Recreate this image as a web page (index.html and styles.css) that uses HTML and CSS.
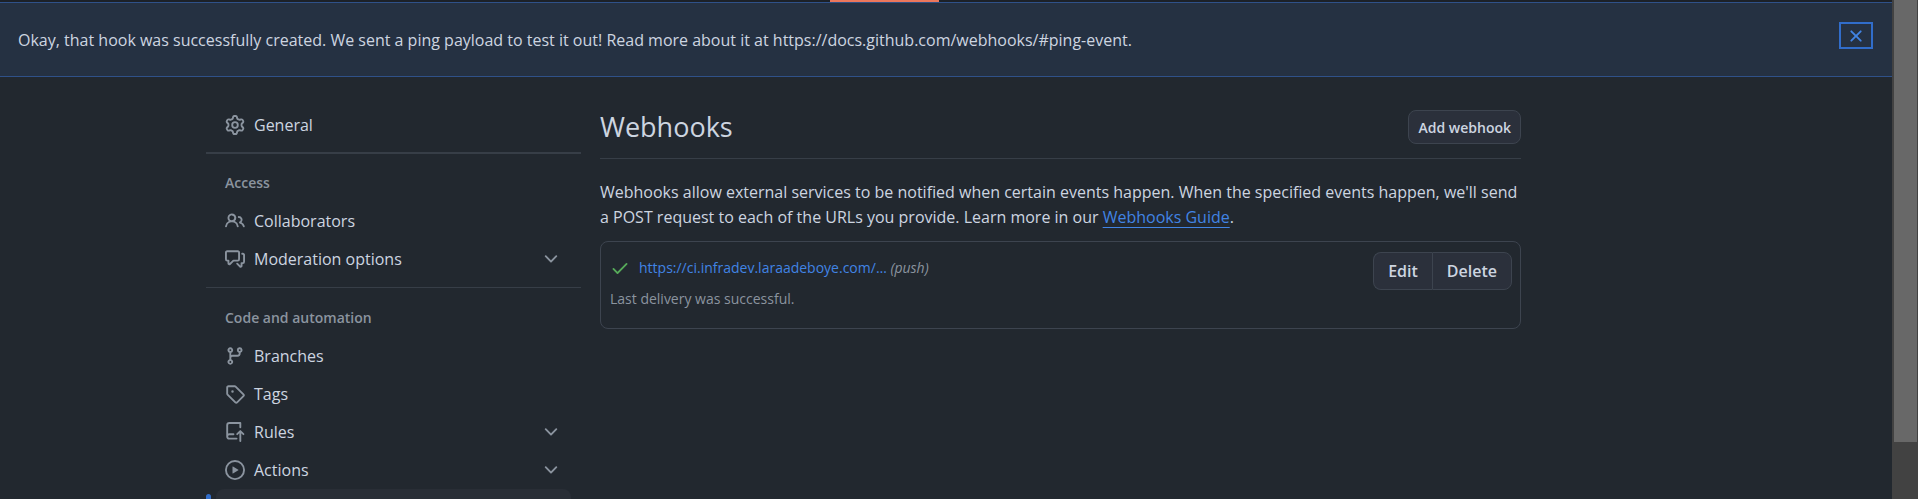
FILE: index.html
```html
<!DOCTYPE html>
<html lang="en">
<head>
<meta charset="utf-8">
<meta name="viewport" content="width=device-width, initial-scale=1">
<title>Webhooks</title>
<link rel="stylesheet" href="styles.css">
</head>
<body>
<div class="page">
  <div class="tabs"><span class="tabs-selected"></span></div>
  <div class="flash" role="status">
    <p class="flash-text">Okay, that hook was successfully created. We sent a ping payload to test it out! Read more about it at https://docs.github.com/webhooks/#ping-event.</p>
    <button class="flash-close" type="button" aria-label="Dismiss this message">
      <svg class="icon-small" viewBox="0 0 16 16" aria-hidden="true"><path d="M3.72 3.72a.75.75 0 0 1 1.06 0L8 6.94l3.22-3.22a.749.749 0 0 1 1.275.326.749.749 0 0 1-.215.734L9.06 8l3.22 3.22a.749.749 0 0 1-.326 1.275.749.749 0 0 1-.734-.215L8 9.06l-3.22 3.22a.751.751 0 0 1-1.042-.018.751.751 0 0 1-.018-1.042L6.94 8 3.72 4.78a.75.75 0 0 1 0-1.06Z"/></svg>
    </button>
  </div>
  <div class="layout">
    <nav class="sidebar" aria-label="Settings">
      <a class="item" href="#general">
        <svg class="icon" viewBox="0 0 16 16" aria-hidden="true"><path d="M8 0a8.2 8.2 0 0 1 .701.031C9.444.095 9.99.645 10.16 1.29l.288 1.107c.018.066.079.158.212.224.231.114.454.243.668.386.123.082.233.09.299.071l1.103-.303c.644-.176 1.392.021 1.82.63.27.385.506.792.704 1.218.315.675.111 1.422-.364 1.891l-.814.806c-.049.048-.098.147-.088.294.016.257.016.515 0 .772-.01.147.038.246.088.294l.814.806c.475.469.679 1.216.364 1.891a7.977 7.977 0 0 1-.704 1.217c-.428.61-1.176.807-1.82.63l-1.102-.302c-.067-.019-.177-.011-.3.071a5.909 5.909 0 0 1-.668.386c-.133.066-.194.158-.211.224l-.29 1.106c-.168.646-.715 1.196-1.458 1.26a8.006 8.006 0 0 1-1.402 0c-.743-.064-1.289-.614-1.458-1.26l-.289-1.106c-.018-.066-.079-.158-.212-.224a5.738 5.738 0 0 1-.668-.386c-.123-.082-.233-.09-.299-.071l-1.103.303c-.644.176-1.392-.021-1.82-.63a8.12 8.12 0 0 1-.704-1.218c-.315-.675-.111-1.422.363-1.891l.815-.806c.05-.048.098-.147.088-.294a6.214 6.214 0 0 1 0-.772c.01-.147-.038-.246-.088-.294l-.815-.806C.635 6.045.431 5.298.746 4.623a7.92 7.92 0 0 1 .704-1.217c.428-.61 1.176-.807 1.82-.63l1.102.302c.067.019.177.011.3-.071.214-.143.437-.272.668-.386.133-.066.194-.158.211-.224l.29-1.106C6.009.645 6.556.095 7.299.03 7.53.01 7.764 0 8 0Zm-.571 1.525c-.036.003-.108.036-.137.146l-.289 1.105c-.147.561-.549.967-.998 1.189-.173.086-.34.183-.5.29-.417.278-.97.423-1.529.27l-1.103-.303c-.109-.03-.175.016-.195.045-.22.312-.412.644-.573.99-.014.031-.021.11.059.19l.815.806c.411.406.562.957.53 1.456a4.709 4.709 0 0 0 0 .582c.032.499-.119 1.05-.53 1.456l-.815.806c-.081.08-.073.159-.059.19.162.346.353.677.573.989.02.03.085.076.195.046l1.102-.303c.56-.153 1.113-.008 1.53.27.161.107.328.204.501.29.447.222.85.629.997 1.189l.289 1.105c.029.109.101.143.137.146a6.6 6.6 0 0 0 1.142 0c.036-.003.108-.036.137-.146l.289-1.105c.147-.561.549-.967.998-1.189.173-.086.34-.183.5-.29.417-.278.97-.423 1.529-.27l1.103.303c.109.029.175-.016.195-.045.22-.313.411-.644.573-.99.014-.031.021-.11-.059-.19l-.815-.806c-.411-.406-.562-.957-.53-1.456a4.709 4.709 0 0 0 0-.582c-.032-.499.119-1.05.53-1.456l.815-.806c.081-.08.073-.159.059-.19a6.464 6.464 0 0 0-.573-.989c-.02-.03-.085-.076-.195-.046l-1.102.303c-.56.153-1.113.008-1.53-.27a4.44 4.44 0 0 0-.501-.29c-.447-.222-.85-.629-.997-1.189l-.289-1.105c-.029-.11-.101-.143-.137-.146a6.6 6.6 0 0 0-1.142 0ZM11 8a3 3 0 1 1-6 0 3 3 0 0 1 6 0ZM9.5 8a1.5 1.5 0 1 0-3.001.001A1.5 1.5 0 0 0 9.5 8Z"/></svg>
        <span class="item-label">General</span>
      </a>
      <section class="group group-strong">
        <h2 class="group-title">Access</h2>
        <a class="item" href="#collaborators">
          <svg class="icon" viewBox="0 0 16 16" aria-hidden="true"><path d="M2 5.5a3.5 3.5 0 1 1 5.898 2.549 5.508 5.508 0 0 1 3.034 4.084.75.75 0 1 1-1.482.235 4 4 0 0 0-7.9 0 .75.75 0 0 1-1.482-.236A5.507 5.507 0 0 1 3.102 8.05 3.493 3.493 0 0 1 2 5.5ZM11 4a3.001 3.001 0 0 1 2.22 5.018 5.01 5.01 0 0 1 2.56 3.012.749.749 0 0 1-.885.954.752.752 0 0 1-.549-.514 3.507 3.507 0 0 0-2.522-2.372.75.75 0 0 1-.574-.73v-.352a.75.75 0 0 1 .416-.672A1.5 1.5 0 0 0 11 5.5.75.75 0 0 1 11 4Zm-5.5-.5a2 2 0 1 0-.001 3.999A2 2 0 0 0 5.5 3.5Z"/></svg>
          <span class="item-label">Collaborators</span>
        </a>
        <button class="item" type="button" aria-expanded="false">
          <svg class="icon" viewBox="0 0 16 16" aria-hidden="true"><path d="M1.75 1h8.5c.966 0 1.75.784 1.75 1.75v5.5A1.75 1.75 0 0 1 10.25 10H7.061l-2.574 2.573A1.458 1.458 0 0 1 2 11.543V10h-.25A1.75 1.75 0 0 1 0 8.25v-5.5C0 1.784.784 1 1.75 1ZM1.5 2.75v5.5c0 .138.112.25.25.25h1a.75.75 0 0 1 .75.75v2.19l2.72-2.72a.749.749 0 0 1 .53-.22h3.5a.25.25 0 0 0 .25-.25v-5.5a.25.25 0 0 0-.25-.25h-8.5a.25.25 0 0 0-.25.25Zm13 2a.25.25 0 0 0-.25-.25h-.5a.75.75 0 0 1 0-1.5h.5c.966 0 1.75.784 1.75 1.75v5.5A1.75 1.75 0 0 1 14.25 12H14v1.543a1.458 1.458 0 0 1-2.487 1.03L9.22 12.28a.749.749 0 0 1 .326-1.275.749.749 0 0 1 .734.215l2.22 2.22v-2.19a.75.75 0 0 1 .75-.75h1a.25.25 0 0 0 .25-.25Z"/></svg>
          <span class="item-label">Moderation options</span>
          <svg class="icon" viewBox="0 0 16 16" aria-hidden="true"><path d="M12.78 5.22a.749.749 0 0 1 0 1.06l-4.25 4.25a.749.749 0 0 1-1.06 0L3.22 6.28a.749.749 0 1 1 1.06-1.06L8 8.939l3.72-3.719a.749.749 0 0 1 1.06 0Z"/></svg>
        </button>
      </section>
      <section class="group">
        <h2 class="group-title">Code and automation</h2>
        <a class="item" href="#branches">
          <svg class="icon" viewBox="0 0 16 16" aria-hidden="true"><path d="M9.5 3.25a2.25 2.25 0 1 1 3 2.122V6A2.5 2.5 0 0 1 10 8.5H6a1 1 0 0 0-1 1v1.128a2.251 2.251 0 1 1-1.5 0V5.372a2.25 2.25 0 1 1 1.5 0v1.836A2.493 2.493 0 0 1 6 7h4a1 1 0 0 0 1-1v-.628A2.25 2.25 0 0 1 9.5 3.25Zm-6 0a.75.75 0 1 0 1.5 0 .75.75 0 0 0-1.5 0Zm8.25-.75a.75.75 0 1 0 0 1.5.75.75 0 0 0 0-1.5ZM4.25 12a.75.75 0 1 0 0 1.5.75.75 0 0 0 0-1.5Z"/></svg>
          <span class="item-label">Branches</span>
        </a>
        <a class="item" href="#tags">
          <svg class="icon" viewBox="0 0 16 16" aria-hidden="true"><path d="M1 7.775V2.75C1 1.784 1.784 1 2.75 1h5.025c.464 0 .91.184 1.238.513l6.25 6.25a1.75 1.75 0 0 1 0 2.474l-5.026 5.026a1.75 1.75 0 0 1-2.474 0l-6.25-6.25A1.752 1.752 0 0 1 1 7.775Zm1.5 0c0 .066.026.13.073.177l6.25 6.25a.25.25 0 0 0 .354 0l5.025-5.025a.25.25 0 0 0 0-.354l-6.25-6.25a.25.25 0 0 0-.177-.073H2.75a.25.25 0 0 0-.25.25ZM6 5a1 1 0 1 1 0 2 1 1 0 0 1 0-2Z"/></svg>
          <span class="item-label">Tags</span>
        </a>
        <button class="item" type="button" aria-expanded="false">
          <svg class="icon" viewBox="0 0 16 16" aria-hidden="true"><path d="M1 2.5A2.5 2.5 0 0 1 3.5 0h8.75a.75.75 0 0 1 .75.75v3.5a.75.75 0 0 1-1.5 0V1.5h-8a1 1 0 0 0-1 1v6.708A2.493 2.493 0 0 1 3.5 9h3.25a.75.75 0 0 1 0 1.5H3.5a1 1 0 0 0 0 2h5.75a.75.75 0 0 1 0 1.5H3.5A2.5 2.5 0 0 1 1 11.5Zm13.23 7.79-1.224-1.224v6.184a.75.75 0 0 1-1.5 0V9.066L10.28 10.29a.75.75 0 0 1-1.06-1.061l2.505-2.504a.75.75 0 0 1 1.06 0L15.29 9.23a.751.751 0 0 1-.018 1.042.751.751 0 0 1-1.042.018Z"/></svg>
          <span class="item-label">Rules</span>
          <svg class="icon" viewBox="0 0 16 16" aria-hidden="true"><path d="M12.78 5.22a.749.749 0 0 1 0 1.06l-4.25 4.25a.749.749 0 0 1-1.06 0L3.22 6.28a.749.749 0 1 1 1.06-1.06L8 8.939l3.72-3.719a.749.749 0 0 1 1.06 0Z"/></svg>
        </button>
        <button class="item" type="button" aria-expanded="false">
          <svg class="icon" viewBox="0 0 16 16" aria-hidden="true"><path d="M8 0a8 8 0 1 1 0 16A8 8 0 0 1 8 0ZM1.5 8a6.5 6.5 0 1 0 13 0 6.5 6.5 0 0 0-13 0Zm4.879-2.773 4.264 2.559a.25.25 0 0 1 0 .428l-4.264 2.559A.25.25 0 0 1 6 10.559V5.442a.25.25 0 0 1 .379-.215Z"/></svg>
          <span class="item-label">Actions</span>
          <svg class="icon" viewBox="0 0 16 16" aria-hidden="true"><path d="M12.78 5.22a.749.749 0 0 1 0 1.06l-4.25 4.25a.749.749 0 0 1-1.06 0L3.22 6.28a.749.749 0 1 1 1.06-1.06L8 8.939l3.72-3.719a.749.749 0 0 1 1.06 0Z"/></svg>
        </button>
        <a class="item item-current" href="#hooks" aria-current="page"></a>
      </section>
    </nav>
    <main class="content">
      <header class="subhead">
        <h1 class="subhead-title">Webhooks</h1>
        <button class="button button-small" type="button">Add webhook</button>
      </header>
      <p class="intro">Webhooks allow external services to be notified when certain events happen. When the specified events happen, we'll send a POST request to each of the URLs you provide. Learn more in our <a class="guide-link" href="#guide">Webhooks Guide</a>.</p>
      <article class="hook">
        <div class="hook-info">
          <div class="hook-line">
            <svg class="icon icon-success" viewBox="0 0 16 16" aria-hidden="true"><path d="M13.78 4.22a.75.75 0 0 1 0 1.06l-7.25 7.25a.75.75 0 0 1-1.06 0L2.22 9.28a.751.751 0 0 1 .018-1.042.751.751 0 0 1 1.042-.018L6 10.94l6.72-6.72a.75.75 0 0 1 1.06 0Z"/></svg>
            <span><a class="hook-url" href="#hook">https://ci.infradev.laraadeboye.com/…</a> <em class="hook-event">(push)</em></span>
          </div>
          <p class="hook-status">Last delivery was successful.</p>
        </div>
        <div class="button-group">
          <button class="button" type="button">Edit</button>
          <button class="button" type="button">Delete</button>
        </div>
      </article>
    </main>
  </div>
</div>
<div class="scrollbar" aria-hidden="true"><div class="scrollbar-thumb"></div></div>
</body>
</html>
```
FILE: styles.css
```css
* {
  box-sizing: border-box;
}

body {
  display: flex;
  height: 100vh;
  margin: 0;
  overflow: hidden;
  background: #22282f;
  color: #cdd5e0;
  font: 16px/25px "Open Sans", "Noto Sans", sans-serif;
}

p,
h1,
h2 {
  margin: 0;
}

button {
  font: inherit;
  color: inherit;
  cursor: pointer;
}

.page {
  flex: 1;
  min-width: 0;
  overflow: hidden;
}

.tabs {
  height: 2px;
  padding-left: 830px;
  background: #1c2128;
}

.tabs-selected {
  display: block;
  width: 109px;
  height: 2px;
  background: #ec775c;
}

.flash {
  display: flex;
  justify-content: space-between;
  align-items: flex-start;
  padding: 19px 19px 23px 18px;
  border: solid #2f5189;
  border-width: 1px 0;
  background: #253142;
}

.flash-text {
  padding-top: 6px;
}

.flash-close {
  display: flex;
  align-items: center;
  justify-content: center;
  width: 34px;
  height: 27px;
  padding: 0;
  border: 2px solid #316dca;
  background: none;
}

.icon,
.icon-small {
  flex: none;
  width: 20px;
  height: 20px;
  fill: #8b949f;
}

.flash-close .icon-small {
  fill: #4184e4;
}

.layout {
  display: flex;
  gap: 19px;
  max-width: 1480px;
  margin: 0 auto;
  padding-top: 29px;
}

.sidebar {
  flex: none;
  width: 375px;
}

.item {
  display: flex;
  align-items: center;
  gap: 9px;
  width: 100%;
  height: 38px;
  padding: 0 20px 0 19px;
  border: 0;
  background: none;
  color: inherit;
  text-align: left;
  text-decoration: none;
}

.item-label {
  flex: 1;
}

.item-current {
  position: relative;
  width: auto;
  margin: 0 10px;
  border-radius: 8px;
  background: #292e36;
}

.item-current::before {
  content: "";
  position: absolute;
  top: 5px;
  bottom: 5px;
  left: -10px;
  width: 5px;
  border-radius: 8px;
  background: #316dca;
}

.group {
  margin-top: 9px;
  padding-top: 11px;
  border-top: 1px solid #373e47;
}

.group-strong {
  margin-top: 8px;
  padding-top: 10px;
  border-top-width: 2px;
}

.group-title {
  padding-left: 19px;
  color: #8b949f;
  font-size: 14px;
  font-weight: 600;
  line-height: 38px;
}

.content {
  flex: 1;
  max-width: 921px;
  padding-top: 4px;
}

.subhead {
  display: flex;
  align-items: center;
  justify-content: space-between;
  padding-bottom: 14px;
  border-bottom: 1px solid #373e47;
}

.subhead-title {
  font-size: 27px;
  font-weight: 400;
  line-height: 34px;
}

.button {
  height: 38px;
  padding: 0 14px;
  border: 1px solid #3d444f;
  border-radius: 8px;
  background: #2b303b;
  color: #cdd5e0;
  font-weight: 600;
}

.button-small {
  height: 34px;
  padding: 0 9px;
  font-size: 14px;
}

.intro {
  margin: 21px 0 11px;
}

.guide-link {
  color: #4184e4;
  text-decoration: underline;
  text-underline-offset: 4px;
}

.hook {
  display: flex;
  justify-content: space-between;
  align-items: flex-start;
  padding: 10px 8px 14px;
  border: 1px solid #3d444f;
  border-radius: 8px;
  color: #8b949f;
  font-size: 14px;
}

.hook-info {
  padding-left: 1px;
}

.hook-line {
  display: flex;
  align-items: center;
  gap: 9px;
  padding: 3px 0;
}

.icon-success {
  fill: #57ab5a;
}

.hook-url {
  color: #4184e4;
  text-decoration: none;
}

.hook-status {
  padding: 3px 0;
}

.button-group {
  display: flex;
}

.button-group .button {
  font-size: 16px;
}

.button-group .button:first-child {
  border-right: 0;
  border-radius: 8px 0 0 8px;
}

.button-group .button:last-child {
  border-radius: 0 8px 8px 0;
}

.scrollbar {
  flex: none;
  width: 26px;
  padding: 0 1px 0 2px;
  background: #424242;
}

.scrollbar-thumb {
  height: 88.6%;
  background: #686868;
}
```
